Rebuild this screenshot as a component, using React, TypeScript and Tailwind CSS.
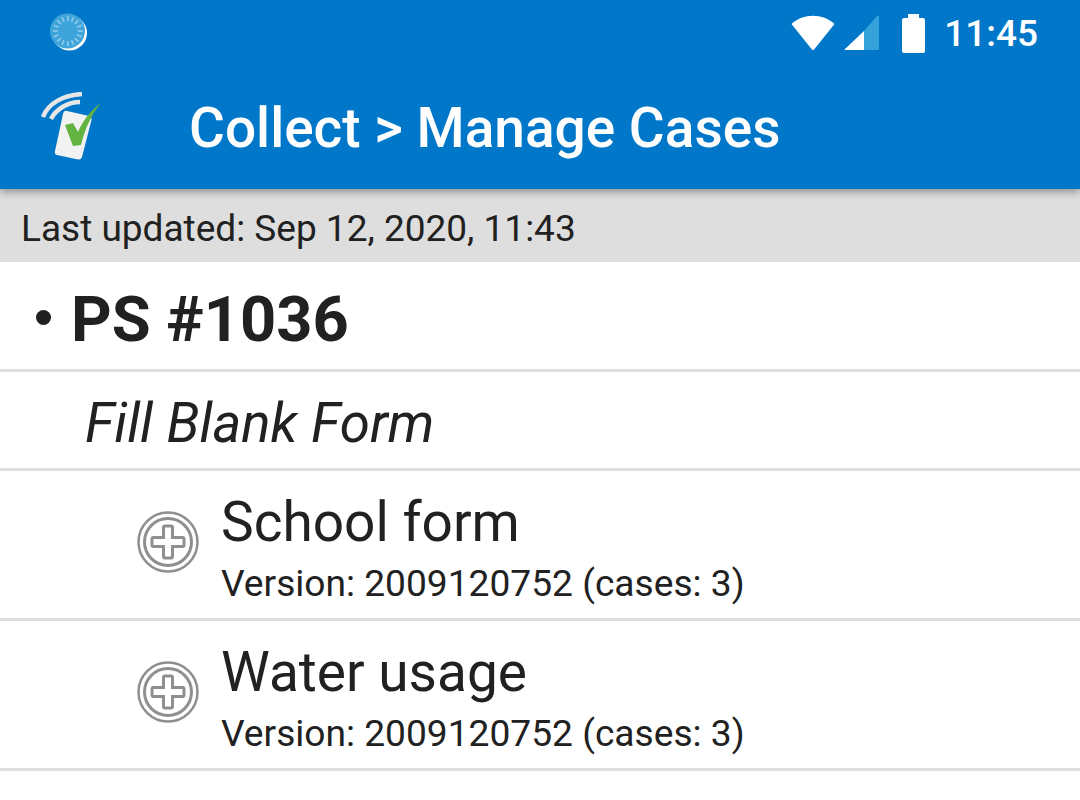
function SyncIcon() {
  const ticks = Array.from({ length: 16 }, (_, i) => (i * 360) / 16);
  return (
    <svg width="40" height="40" viewBox="0 0 40 40" className="shrink-0">
      <circle cx="20.5" cy="20" r="17.5" fill="#ffffff" />
      <circle cx="18.5" cy="18" r="17.5" fill="#3fa4da" />
      {ticks.map((deg) => (
        <rect key={deg} x="18" y="3" width="1.6" height="5" fill="#8fcbea" transform={`rotate(${deg} 18.8 18)`} />
      ))}
    </svg>
  );
}

function AppLogo() {
  return (
    <svg width="64" height="72" viewBox="0 0 64 72" className="shrink-0">
      <path d="M3 25 C8 11 24 3 42 2" fill="none" stroke="#e6e6e6" strokeWidth="4.5" />
      <path d="M11 27 C16 17 28 10 40 10" fill="none" stroke="#e6e6e6" strokeWidth="4.5" />
      <path d="M27 19 L49 24 Q52 25 51.5 28 L42 65 Q41 68 38 67.500 L17 63 Q14 62 15 59 L23 22 Q24 18 27 19 Z" fill="#f2f2f2" />
      <path d="M25 33 L33 31 L38 40 C43 28 52 17 61 11 C53 20 45 36 41 53 L33 54 Z" fill="#62b33f" />
    </svg>
  );
}

function WifiIcon() {
  return (
    <svg width="46" height="38" viewBox="0 0 46 38">
      <path d="M1.500 10 C13 -1 33 -1 44.500 10 L24.500 35 Q23 37 21.500 35 Z" fill="#ffffff" />
    </svg>
  );
}

function SignalIcon() {
  return (
    <svg width="36" height="36" viewBox="0 0 36 36">
      <path d="M35 1 L35 34 Q35 35 34 35 L20 35 L20 16 L33 1 Q34 0 35 1 Z" fill="#35a3da" />
      <path d="M20 16 L20 35 L1 35 Q0 35 1 34 Z" fill="#ffffff" />
    </svg>
  );
}

function BatteryIcon() {
  return (
    <svg width="23" height="39" viewBox="0 0 23 39">
      <path d="M6 0 H17 V4 H21 Q23 4 23 6 V37 Q23 39 21 39 H2 Q0 39 0 37 V6 Q0 4 2 4 H6 Z" fill="#ffffff" />
    </svg>
  );
}

function AddIcon() {
  return (
    <svg width="62" height="62" viewBox="0 0 62 62" className="-mt-[6px] shrink-0">
      <circle cx="31" cy="31" r="29.500" fill="none" stroke="#8f8f8f" strokeWidth="2.500" />
      <circle cx="31" cy="31" r="23.500" fill="none" stroke="#8f8f8f" strokeWidth="3" />
      <path
        d="M28 15 H34 Q35.500 15 35.500 16.500 V26.500 H45.500 Q47 26.500 47 28 V34 Q47 35.500 45.500 35.500 H35.500 V45.500 Q35.500 47 34 47 H28 Q26.500 47 26.500 45.500 V35.500 H16.500 Q15 35.500 15 34 V28 Q15 26.500 16.500 26.500 H26.500 V16.500 Q26.500 15 28 15 Z"
        fill="#ffffff"
        stroke="#8f8f8f"
        strokeWidth="3"
      />
    </svg>
  );
}

function FormRow({ name }: { name: string }) {
  return (
    <div className="flex h-[150px] items-center border-b-[3px] border-[#dedede] pl-[137px]">
      <AddIcon />
      <div className="ml-[22px] flex flex-col pt-[8px]">
        <div className="text-[55px] leading-[61px] text-[#212121]">{name}</div>
        <div className="mt-[9px] text-[37.15px] leading-[43px] text-[#212121]">Version: 2009120752 (cases: 3)</div>
      </div>
    </div>
  );
}

export default function App() {
  return (
    <div className="h-[800px] w-[1080px] overflow-hidden bg-white font-['Roboto',sans-serif]">
      <header className="relative z-10 h-[189px] bg-[#0077c8] shadow-[0_3px_8px_rgba(0,0,0,0.35)]">
        <div className="flex h-[66px] items-center pl-[49px] pr-[42px]">
          <SyncIcon />
          <div className="ml-auto flex items-center">
            <WifiIcon />
            <div className="ml-[8px]">
              <SignalIcon />
            </div>
            <div className="ml-[22px]">
              <BatteryIcon />
            </div>
            <span className="ml-[19px] text-[37px] font-medium leading-none text-white">11:45</span>
          </div>
        </div>
        <div className="flex h-[123px] items-center pl-[40px]">
          <AppLogo />
          <h1 className="ml-[85px] pt-[2px] text-[55px] font-medium leading-none text-white">Collect &gt; Manage Cases</h1>
        </div>
      </header>
      <div className="flex h-[73px] items-center bg-[#dedede] pl-[21px] pt-[6px] text-[37px] text-[#212121]">
        Last updated: Sep 12, 2020, 11:43
      </div>
      <div className="flex h-[110px] items-center border-b-[3px] border-[#dedede] pl-[35px] pt-[8px] text-[63.2px] font-bold text-[#212121]">
        <span className="-mt-[5px] ml-[1px] mr-[20px] h-[15px] w-[15px] rounded-full bg-[#212121]" />
        PS #1036
      </div>
      <div className="flex h-[99px] items-center border-b-[3px] border-[#dedede] pl-[85px] pt-[6px] text-[54.7px] italic text-[#212121]">
        Fill Blank Form
      </div>
      <FormRow name="School form" />
      <FormRow name="Water usage" />
    </div>
  );
}
